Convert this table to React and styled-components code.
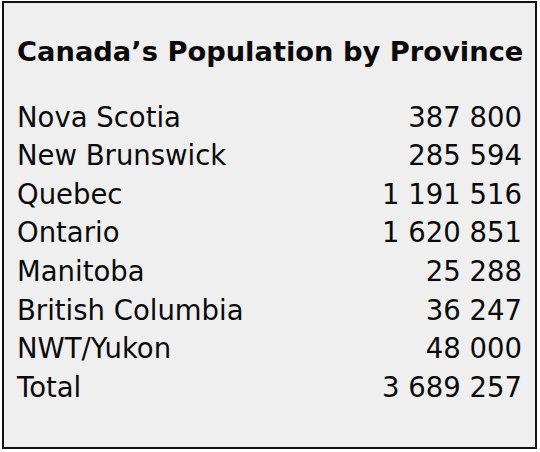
import React from "react";
import styled, { createGlobalStyle } from "styled-components";

const Global = createGlobalStyle`
  html, body { margin: 0; padding: 0; background: #ffffff; }
  body { font-family: "DejaVu Sans", Verdana, sans-serif; }
`;

const Page = styled.div`
  width: 540px;
  height: 452px;
  padding: 1px 3px 3px 2px;
  box-sizing: border-box;
`;

const Card = styled.section`
  box-sizing: border-box;
  width: 535px;
  height: 448px;
  border: 2px solid #111111;
  background: #efefef;
  padding: 30px 13px 0 13px;
  color: #0a0a0a;
  font-size: 27.5px;
  line-height: 38.6px;
`;

const Title = styled.h1`
  margin: 0 0 26px 0;
  font-size: 27.3px;
  font-weight: bold;
  line-height: 38.6px;
  white-space: nowrap;
`;

const Table = styled.div`
  display: grid;
  grid-template-columns: 1fr auto;
`;

const Name = styled.div`
  white-space: nowrap;
`;

const Value = styled.div`
  text-align: right;
  white-space: nowrap;
`;

const rows = [
  ["Nova Scotia", "387 800"],
  ["New Brunswick", "285 594"],
  ["Quebec", "1 191 516"],
  ["Ontario", "1 620 851"],
  ["Manitoba", "25 288"],
  ["British Columbia", "36 247"],
  ["NWT/Yukon", "48 000"],
  ["Total", "3 689 257"],
];

export default function App() {
  return (
    <Page>
      <Global />
      <Card>
        <Title>Canada’s Population by Province</Title>
        <Table>
          {rows.map(([n, v]) => (
            <React.Fragment key={n}>
              <Name>{n}</Name>
              <Value>{v}</Value>
            </React.Fragment>
          ))}
        </Table>
      </Card>
    </Page>
  );
}
